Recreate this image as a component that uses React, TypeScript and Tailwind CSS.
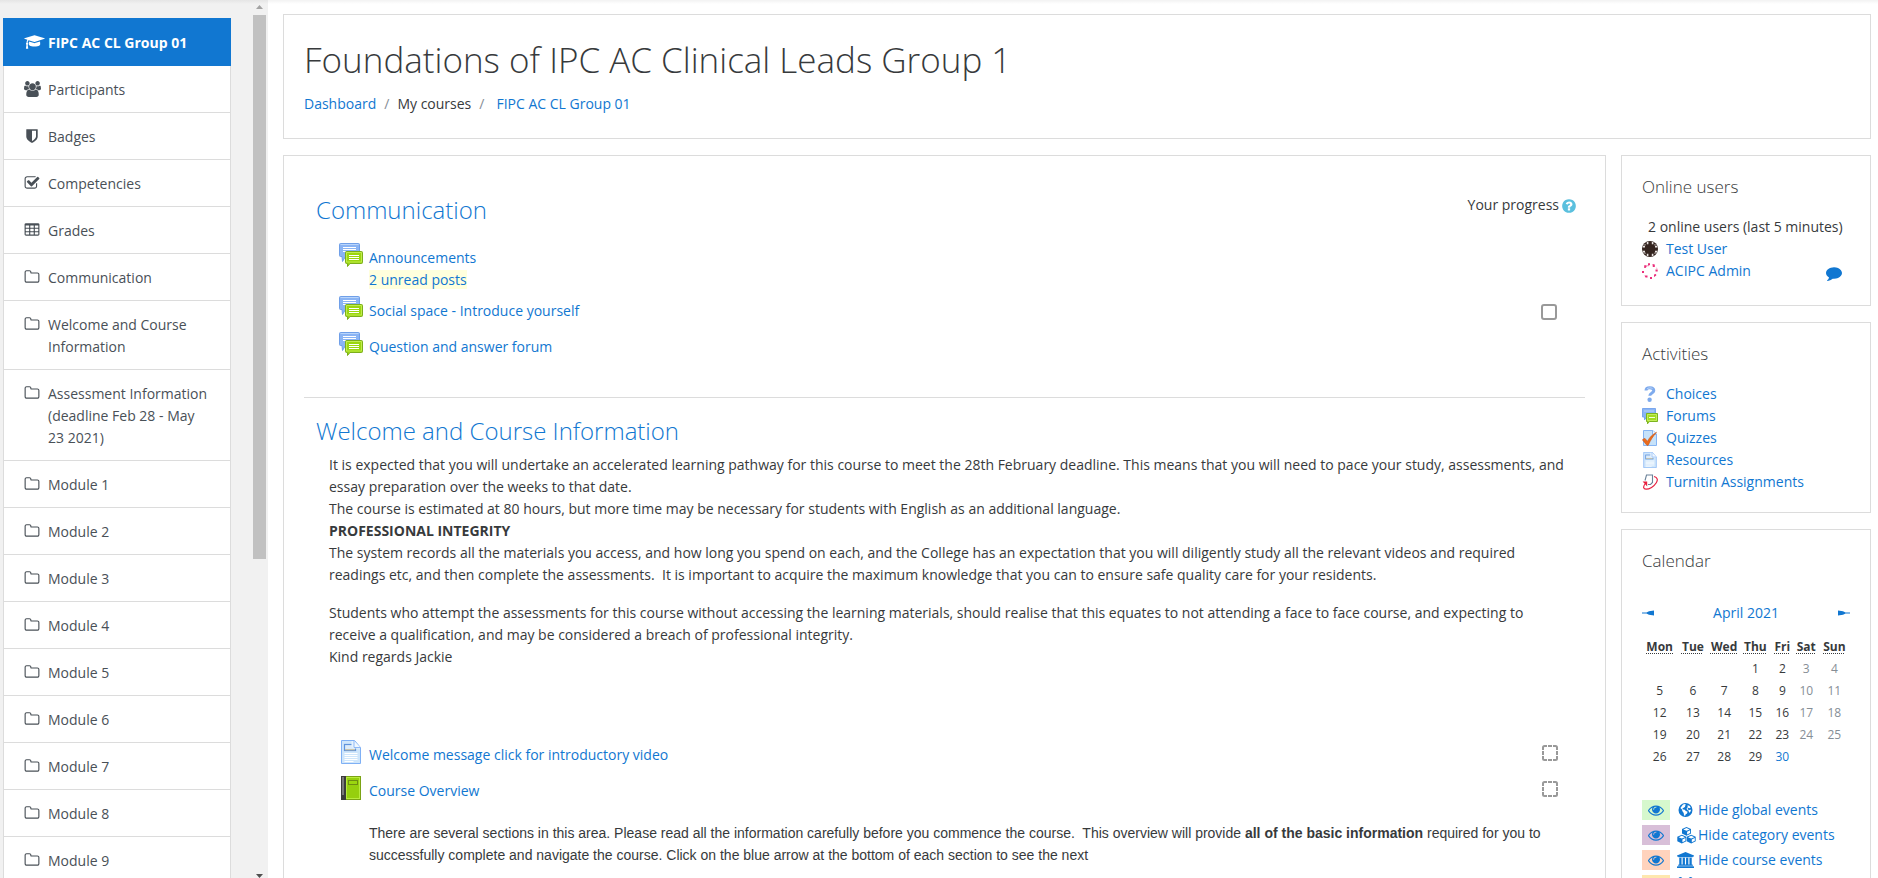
import type { ReactNode } from "react";

const LINK = "text-[#1177d1] hover:underline";

function Glyph({ d, w = 1792, className }: { d: string; w?: number; className: string }) {
  return (
    <svg viewBox={`0 0 ${w} 1792`} className={className} fill="currentColor" aria-hidden="true">
      <path d={d} />
    </svg>
  );
}

const CAP =
  "M1774 836l18 316q4 69-82 128t-235 93.5-323 34.5-323-34.5-235-93.5-82-128l18-316 574 181q22 7 48 7t48-7zm530-324q0 23-22 31l-1120 352q-4 1-10 1t-10-1l-652-206q-43 34-71 111.5t-34 178.5q63 36 63 109 0 69-58 107l58 433q2 14-8 25-9 11-24 11h-192q-15 0-24-11-10-11-8-25l58-433q-58-38-58-107 0-73 65-111 11-207 98-330l-333-104q-22-8-22-31t22-31l1120-352q4-1 10-1t10 1l1120 352q22 8 22 31z";
const USERS =
  "M593 896q-162 5-265 128h-134q-82 0-138-40.5t-56-118.5q0-353 124-353 6 0 43.5 21t97.5 42.5 119 21.5q67 0 133-23-5 37-5 66 0 139 81 256zm1071 637q0 120-73 189.5t-194 69.5h-874q-121 0-194-69.5t-73-189.5q0-53 3.5-103.5t14-109 26.5-108.5 43-97.5 62-81 85.5-53.5 111.5-20q10 0 43 21.5t73 48 107 48 135 21.5 135-21.5 107-48 73-48 43-21.5q61 0 111.5 20t85.5 53.5 62 81 43 97.5 26.5 108.5 14 109 3.5 103.5zm-1024-1277q0 106-75 181t-181 75-181-75-75-181 75-181 181-75 181 75 75 181zm704 384q0 159-112.5 271.5t-271.5 112.5-271.5-112.5-112.5-271.5 112.5-271.5 271.5-112.5 271.5 112.5 112.5 271.5zm576 225q0 78-56 118.5t-138 40.5h-134q-103-123-265-128 81-117 81-256 0-29-5-66 66 23 133 23 59 0 119-21.5t97.5-42.5 43.5-21q124 0 124 353zm-128-609q0 106-75 181t-181 75-181-75-75-181 75-181 181-75 181 75 75 181z";
const SHIELD =
  "M1344 960v-640h-448v1137q119-63 213-137 235-184 235-360zm192-768v768q0 86-33.5 170.5t-83 150-118 127.5-126.5 103-121 77.5-89.5 49.5-42.5 20q-12 6-26 6t-26-6q-16-7-42.5-20t-89.5-49.5-121-77.5-126.5-103-118-127.5-83-150-33.5-170.5v-768q0-26 19-45t45-19h1152q26 0 45 19t19 45z";
const CHECK =
  "M1472 930v318q0 119-84.5 203.5t-203.5 84.5h-832q-119 0-203.5-84.5t-84.5-203.5v-832q0-119 84.5-203.5t203.5-84.5h832q63 0 117 25 15 7 18 23 3 17-9 29l-49 49q-10 10-23 10-3 0-9-2-23-6-45-6h-832q-66 0-113 47t-47 113v832q0 66 47 113t113 47h832q66 0 113-47t47-113v-254q0-13 9-22l64-64q10-10 23-10 6 0 12 3 20 8 20 29zm231-489l-814 814q-24 24-57 24t-57-24l-430-430q-24-24-24-57t24-57l110-110q24-24 57-24t57 24l263 263 647-647q24-24 57-24t57 24l110 110q24 24 24 57t-24 57z";
const CELL = "v-192q0-14-9-23t-23-9h-320q-14 0-23 9t-9 23v192q0 14 9 23t23 9h320q14 0 23-9t9-23z";
const TABLE =
  [576, 1088, 1600].flatMap((x) => [608, 992, 1376].map((y) => `M${x} ${y}${CELL}`)).join("") +
  "M1728 288v1088q0 66-47 113t-113 47h-1344q-66 0-113-47t-47-113v-1088q0-66 47-113t113-47h1344q66 0 113 47t47 113z";
const FOLDER =
  "M1600 1312v-704q0-40-28-68t-68-28h-704q-40 0-68-28t-28-68v-64q0-40-28-68t-68-28h-320q-40 0-68 28t-28 68v960q0 40 28 68t68 28h1216q40 0 68-28t28-68zm128-704v704q0 92-66 158t-158 66h-1216q-92 0-158-66t-66-158v-960q0-92 66-158t158-66h320q92 0 158 66t66 158v32h672q92 0 158 66t66 158z";
const EYE =
  "M1664 960q-152-236-381-353 61 104 61 225 0 185-131.5 316.5t-316.5 131.5-316.5-131.5-131.5-316.5q0-121 61-225-229 117-381 353 133 205 333.5 326.5t434.5 121.5 434.5-121.5 333.5-326.5zm-720-384q0-20-14-34t-34-14q-125 0-214.5 89.5t-89.5 214.5q0 20 14 34t34 14 34-14 14-34q0-86 61-147t147-61q20 0 34-14t14-34zm848 384q0 34-20 69-140 230-376.5 368.5t-499.5 138.5-499.5-139-376.5-368q-20-35-20-69t20-69q140-229 376.5-368t499.5-139 499.5 139 376.5 368q20 35 20 69z";
const COMMENT =
  "M1792 896q0 174-120 321.5t-326 233-450 85.5q-70 0-145-8-198 175-460 242-49 14-114 22-17 2-30.5-9t-17.5-29v-1q-3-4-.5-12t2-10 4.5-9.5l6-9 7-8.5 8-9q7-8 31-34.5t34.5-38 31-39.5 32.5-51 27-59 26-76q-157-89-247.5-220t-90.5-281q0-130 71-248.5t191-204.5 286-136.5 348-50.5q244 0 450 85.5t326 233 120 321.5z";
const HELP =
  "M1024 1376v-192q0-14-9-23t-23-9h-192q-14 0-23 9t-9 23v192q0 14 9 23t23 9h192q14 0 23-9t9-23zm256-672q0-88-55.5-163t-138.5-116-170-41q-243 0-371 213-15 24 8 42l132 100q7 6 19 6 16 0 25-12 53-68 86-92 34-24 86-24 48 0 85.5 26t37.5 59q0 38-20 61t-68 45q-63 28-115.5 86.5t-52.5 125.5v36q0 14 9 23t23 9h192q14 0 23-9t9-23q0-19 21.5-49.5t54.5-49.5q32-18 49-28.5t46-35 44.5-48 28-60.5 12.5-81zm384 192q0 209-103 385.5t-279.5 279.5-385.5 103-385.5-103-279.5-279.5-103-385.5 103-385.5 279.5-279.5 385.5-103 385.5 103 279.5 279.5 103 385.5z";
const UNIVERSITY =
  "M960 0l960 384v128h-128q0 26-20.5 45t-48.5 19h-1526q-28 0-48.5-19t-20.5-45h-128v-128zm-704 640h256v768h128v-768h256v768h128v-768h256v768h128v-768h256v768h59q28 0 48.5 19t20.5 45v64h-1664v-64q0-26 20.5-45t48.5-19h59v-768zm1595 960q28 0 48.5 19t20.5 45v128h-1920v-128q0-26 20.5-45t48.5-19h1782z";

function Globe() {
  return (
    <svg viewBox="0 0 16 16" className="h-4 w-4" aria-hidden="true">
      <circle cx="8.500" cy="8" r="7" fill="#1177d1" />
      <path d="M6 2.400 8 2l1 1-1.200.8.4 1-1.500.9-1.200.5.3 1.200 1.500.2 1.600 1.400 1.700.7-.6 1.700-1.500 1-.4 1.500-1.100-.6-.3-2.400-1.400-1.800L5 7.400 3.400 6z" fill="#fff" />
      <path d="m10.500 3.200 1.900.6 1.300 1.700-1 .7-1.200-.4-1.100 1.100.8.9 1.700.2.800-.6.2 1.400-1.200 2-.8-.9-.3-1.400-1.500-.5-.5-1.500 1.100-1.200z" fill="#fff" />
    </svg>
  );
}

function Cube({ x, y }: { x: number; y: number }) {
  return (
    <g transform={`translate(${x} ${y})`}>
      <path d="M4.500 0 9 1.900v4.500L4.500 8.700 0 6.400V1.900z" fill="#1177d1" />
      <path d="M4.500 1 7.700 2.400 4.500 3.800 1.300 2.400zM5.100 4.700l3-1.400v2.600L5.100 7.500z" fill="#fff" />
    </g>
  );
}

function Cubes() {
  return (
    <svg viewBox="0 0 19 17" className="h-[17px] w-[19px]" aria-hidden="true">
      <Cube x={5} y={0} />
      <Cube x={0.3} y={7.8} />
      <Cube x={9.7} y={7.8} />
    </svg>
  );
}

function ForumIcon() {
  return (
    <svg viewBox="0 0 24 24" className="h-6 w-6" aria-hidden="true">
      <path d="M1.500.5h18a1 1 0 0 1 1 1v11a1 1 0 0 1-1 1H6.500L3.500 18.500 3 13.500H1.500a1 1 0 0 1-1-1v-11a1 1 0 0 1 1-1z" fill="#8ab4f4" stroke="#6f9fe8" />
      <path d="M1.500 1.500h18" stroke="#b9d5fb" />
      <path d="M4 4.500h13M4 6.500h13M4 8.500h3" stroke="#fff" />
      <path d="M7.500 8.500h15a1 1 0 0 1 1 1v10a1 1 0 0 1-1 1H11L8.500 23.500v-3h-1a1 1 0 0 1-1-1v-10a1 1 0 0 1 1-1z" fill="#9bd60f" stroke="#7cae1c" />
      <path d="M7.500 9.500h15v9.500h-15z" fill="none" stroke="#c0ec4f" />
      <path d="M10 12.500h10M10 14.500h10M10 16.500h10" stroke="#fff" />
    </svg>
  );
}

function ForumSmallIcon() {
  return (
    <svg viewBox="0 0 16 16" className="h-4 w-4" aria-hidden="true">
      <path d="M.5.5h13v8.500H4.500L2.500 12V9h-2z" fill="#8ab4f4" stroke="#7aa7ee" />
      <path d="M2 3h10" stroke="#b9d5fb" />
      <path d="M4.500 5.500h11v8H7.500L5.500 15.800V13.500h-1z" fill="#a2db22" stroke="#7cb320" />
      <path d="M5.500 6.500h9v6h-9z" fill="none" stroke="#c4ef5a" />
      <path d="M7 9.500h6" stroke="#f3ffd9" />
    </svg>
  );
}

function PageIcon({ className }: { className: string }) {
  return (
    <svg viewBox="0 0 24 24" className={className} aria-hidden="true">
      <path d="M2.500.5h13l6 7v16h-19z" fill="#cfe6fb" stroke="#7fb0f5" />
      <rect x="5.500" y="4.500" width="11" height="6" fill="#dcebf9" stroke="#5f93dc" strokeWidth="1.200" />
      <path d="M6 9.800h10" stroke="#c9b98f" />
      <path d="M12.500 1v5.500l2 2h6.500l-6-7.500z" fill="#e6f3ff" />
      <path d="M15 1v6.500h6.500" fill="#f0f8ff" stroke="#8fb9f5" />
      <path d="M5.500 13.500h13M5.500 15.500h13M5.500 17.500h13M5.500 19.500h13M5.500 21.500h9" stroke="#fff" />
    </svg>
  );
}

function BookIcon() {
  return (
    <svg viewBox="0 0 24 24" className="h-6 w-6" aria-hidden="true">
      <rect x="2" y="0" width="20" height="24" fill="#7ba315" />
      <rect x="7" y="1" width="14" height="22" fill="#b9ec3e" />
      <rect x="8" y="2" width="12" height="20" fill="#96cf0e" />
      <rect x="2" width="5" height="24" fill="#3c3c3c" />
      <rect x="3" y="1" width="2" height="18" fill="#7a7a7a" />
      <rect x="9.500" y="4.500" width="9" height="4" fill="#9bd60f" stroke="#6d8f10" />
    </svg>
  );
}

function ChoiceIcon() {
  return (
    <svg viewBox="0 0 16 16" className="h-4 w-4" fill="none" aria-hidden="true">
      <path d="M4 4.600C4 2.400 5.700 1.800 7.800 1.800c2.300 0 4 .9 4 3 0 2.200-4 2.300-4 5" stroke="#7fabed" strokeWidth="3" />
      <circle cx="7.600" cy="13.700" r="2.200" fill="#7fabed" />
      <path d="M5 3C6 1.700 9 1.500 10.500 2.500" stroke="#b8d3f8" />
    </svg>
  );
}

function QuizIcon() {
  return (
    <svg viewBox="0 0 16 16" className="h-4 w-4" aria-hidden="true">
      <path d="M1.500.5h9.500l3.500 3.500v11.500h-13z" fill="#c6e2fa" stroke="#86b5f3" />
      <path d="M10.500.5v4h4" fill="#eef7ff" stroke="#86b5f3" />
      <path d="M.3 9.800 2.800 8.300 5.500 11.200C7.500 7.300 10.500 4.300 14.600 2.200 11.200 6 8.600 10 6.300 15.200L5 15.400z" fill="#ea6a1c" stroke="#c4530e" strokeWidth=".5" />
    </svg>
  );
}

function TurnitinIcon() {
  return (
    <svg viewBox="0 0 16 16" className="h-4 w-4" fill="none" aria-hidden="true">
      <path d="M6 10.500H8.500L10.500 8.500V1H4.500L3 6.500" stroke="#6a8299" strokeWidth="1.100" />
      <path d="M12 2.500c3.400 1 4.200 3.200 2.300 6.300-2.200 3.700-7 6.500-10.300 6.400C1.300 15 .8 13 3 10" stroke="#e8203f" strokeWidth="1.200" />
      <path d="M.6 7.500h4.600v5z" fill="#e8203f" />
    </svg>
  );
}

function DarkAvatar() {
  return (
    <svg viewBox="0 0 16 16" className="h-4 w-4" aria-hidden="true">
      <circle cx="8" cy="8" r="8" fill="#34241f" />
      <path
        d="M4.800 1h1.600v2.200H4.800zM9.800 1h1.600v2.200H9.800zM4.800 12.800h1.600V15H4.800zM9.800 12.800h1.600V15H9.800zM.8 4.800H3v1.600H.8zM.8 9.800H3v1.600H.8zM13 4.800h2.200v1.600H13zM13 9.800h2.200v1.600H13zM2.500 2.800 4 4 2.800 4.500zM13.500 2.800 12 4l1.200.5zM2.500 13.200 4 12l-1.200-.5zM13.500 13.200 12 12l1.200-.5z"
        fill="#e9e4e2"
      />
    </svg>
  );
}

function PinkAvatar() {
  return (
    <svg viewBox="0 0 16 16" className="h-4 w-4" aria-hidden="true">
      <path
        d="M6 .3h2v2H6zM10.500 1l2.300.5V4h-2zM2.200 2.200h2.400v1.500L3.500 5H2.200zM13.500 6.500h2.200v2h-2.200zM0 8h2v2H0zM2.500 12.500h3v2h-2zM8 14h2v2H8zM12 11.500l2-.5.3 1.500-2.300 1.500zM14.500 4.500l1 1h-1zM5.500 2.300h1v1h-1z"
        fill="#ea2f7b"
      />
    </svg>
  );
}

const TOP_NAV: { label: string; icon: ReactNode }[] = [
  { label: "Participants", icon: <Glyph d={USERS} w={1920} className="h-4 w-[17px]" /> },
  { label: "Badges", icon: <Glyph d={SHIELD} className="h-4 w-4" /> },
  { label: "Competencies", icon: <Glyph d={CHECK} className="h-4 w-4" /> },
  { label: "Grades", icon: <Glyph d={TABLE} className="h-4 w-4" /> },
];
const SECTIONS = [
  "Communication",
  "Welcome and Course Information",
  "Assessment Information (deadline Feb 28 - May 23 2021)",
  "Module 1",
  "Module 2",
  "Module 3",
  "Module 4",
  "Module 5",
  "Module 6",
  "Module 7",
  "Module 8",
  "Module 9",
];

function NavItem({ icon, label }: { icon: ReactNode; label: string }) {
  return (
    <li>
      <a href="#" className="flex border-x border-b border-[#dcdcdc] bg-white pt-[13px] pr-4 pb-[11px] pl-5 text-[#495057]">
        <span className="flex h-5 w-6 shrink-0 items-center">{icon}</span>
        <span>{label}</span>
      </a>
    </li>
  );
}

function Sidebar() {
  return (
    <aside className="flex w-[268px] shrink-0 justify-between bg-[#f1f1f1] pr-0.5">
      <nav aria-label="Course" className="ml-[3px] w-[228px] overflow-hidden pt-[18px]">
        <ul>
          <li>
            <a href="#" className="flex bg-[#1177d1] pt-3.5 pb-3 pl-[21px] font-bold text-white">
              <span className="flex h-5 w-6 shrink-0 items-center">
                <Glyph d={CAP} w={2304} className="h-4 w-[21px]" />
              </span>
              FIPC AC CL Group 01
            </a>
          </li>
          {TOP_NAV.map((n) => (
            <NavItem key={n.label} {...n} />
          ))}
          {SECTIONS.map((s) => (
            <NavItem key={s} label={s} icon={<Glyph d={FOLDER} className="h-4 w-4" />} />
          ))}
        </ul>
      </nav>
      <div className="flex w-[13px] flex-col items-center" aria-hidden="true">
        <svg viewBox="0 0 13 15" className="h-[15px] w-[13px] shrink-0">
          <path d="M3 9h7L6.500 5z" fill="#a3a3a3" />
        </svg>
        <div className="h-[62%] w-full bg-[#c1c1c1]" />
        <svg viewBox="0 0 13 6" className="mt-auto h-1.5 w-[13px] shrink-0">
          <path d="M3 2h7L6.500 6z" fill="#505050" />
        </svg>
      </div>
    </aside>
  );
}

function SectionTitle({ children }: { children: ReactNode }) {
  return (
    <h3 className="text-2xl leading-8 font-light">
      <a href="#" className={LINK}>
        {children}
      </a>
    </h3>
  );
}

function Activity({ icon, title, unread, children }: { icon: ReactNode; title: string; unread?: string; children?: ReactNode }) {
  return (
    <li className={unread ? "flex pb-[5px]" : "flex pb-2.5"}>
      <span className="mr-1.5 h-6 shrink-0">{icon}</span>
      <div className="flex-1 pt-1">
        <a href="#" className={LINK}>
          {title}
        </a>
        {unread && (
          <div>
            <a href="#" className="bg-[#ffffdd] text-[#1177d1]">
              {unread}
            </a>
          </div>
        )}
      </div>
      {children}
    </li>
  );
}

function AutoCompletion({ title }: { title: string }) {
  return (
    <span className="pt-[5px]">
      <svg viewBox="0 0 16 16" className="h-4 w-4" role="img" aria-label={`Not completed: ${title}`}>
        <path
          d="M1 5V2.500A1.500 1.500 0 0 1 2.500 1H5M6 1h4M11 1h2.500A1.500 1.500 0 0 1 15 2.500V5M15 6v4M15 11v2.500a1.500 1.500 0 0 1-1.500 1.500H11M10 15H6M5 15H2.500A1.500 1.500 0 0 1 1 13.500V11M1 10V6"
          fill="none"
          stroke="#999"
          strokeWidth="2"
        />
      </svg>
    </span>
  );
}

function Course() {
  return (
    <main className="min-w-0 flex-1 border border-[#dcdcdc] px-5 pt-[38px]">
      <section className="border-b border-[#dcdcdc] pb-[29px] pl-3">
        <div className="flex justify-between pr-2">
          <SectionTitle>Communication</SectionTitle>
          <div className="flex h-[22px] items-center gap-0.5">
            Your progress
            <button type="button" aria-label="Help with your progress" className="pt-0.5 text-[#5bc0de]">
              <Glyph d={HELP} className="h-4 w-4" />
            </button>
          </div>
        </div>
        <ul className="mt-[17px] pr-7 pl-[23px]">
          <Activity icon={<ForumIcon />} title="Announcements" unread="2 unread posts" />
          <Activity icon={<ForumIcon />} title="Social space - Introduce yourself">
            <input
              type="checkbox"
              aria-label="Mark Social space - Introduce yourself as done"
              className="mt-2 h-4 w-4 appearance-none rounded-[3px] border-2 border-[#999] bg-white"
            />
          </Activity>
          <Activity icon={<ForumIcon />} title="Question and answer forum" />
        </ul>
      </section>
      <section className="pt-[17px] pl-3">
        <SectionTitle>Welcome and Course Information</SectionTitle>
        <div className="mt-[7px] pl-[13px]">
          <p>
            It is expected that you will undertake an accelerated learning pathway for this course to meet the 28th February deadline. This means that you will need to pace your study, assessments, and
            essay preparation over the weeks to that date.
          </p>
          <p>The course is estimated at 80 hours, but more time may be necessary for students with English as an additional language.</p>
          <p className="font-bold">PROFESSIONAL INTEGRITY</p>
          <p className="pr-8">
            The system records all the materials you access, and how long you spend on each, and the College has an expectation that you will diligently study all the relevant videos and required
            readings etc, and then complete the assessments.&nbsp; It is important to acquire the maximum knowledge that you can to ensure safe quality care for your residents.
          </p>
          <p className="mt-4 pr-8">
            Students who attempt the assessments for this course without accessing the learning materials, should realise that this equates to not attending a face to face course, and expecting to
            receive a qualification, and may be considered a breach of professional integrity.
          </p>
          <p>Kind regards Jackie</p>
        </div>
        <ul className="mt-[72px] pr-[27px] pl-[23px]">
          <Activity icon={<PageIcon className="h-6 w-6" />} title="Welcome message click for introductory video">
            <AutoCompletion title="Welcome message" />
          </Activity>
          <Activity icon={<BookIcon />} title="Course Overview">
            <AutoCompletion title="Course Overview" />
          </Activity>
        </ul>
        <p className="mt-2.5 pr-8 pl-[53px] font-['Liberation_Sans',Arial,sans-serif]">
          There are several sections in this area. Please read all the information carefully before you commence the course.&nbsp; This overview will provide{" "}
          <strong className="font-bold">all of the basic information</strong> required for you to successfully complete and navigate the course. Click on the blue arrow at the bottom of each section to see
          the next
        </p>
      </section>
    </main>
  );
}

function Block({ title, children }: { title: string; children: ReactNode }) {
  return (
    <section className="border border-[#dcdcdc] px-5 pt-5 pb-[19px]">
      <h5 className="text-[17px] leading-[22px] font-light text-[#373a3c]">{title}</h5>
      {children}
    </section>
  );
}

const ACTIVITIES: [string, ReactNode][] = [
  ["Choices", <ChoiceIcon />],
  ["Forums", <ForumSmallIcon />],
  ["Quizzes", <QuizIcon />],
  ["Resources", <PageIcon className="h-4 w-4" />],
  ["Turnitin Assignments", <TurnitinIcon />],
];

const DAYS = ["Mon", "Tue", "Wed", "Thu", "Fri", "Sat", "Sun"];
const WEEKS = [
  [0, 0, 0, 1, 2, 3, 4],
  [5, 6, 7, 8, 9, 10, 11],
  [12, 13, 14, 15, 16, 17, 18],
  [19, 20, 21, 22, 23, 24, 25],
  [26, 27, 28, 29, 30, 0, 0],
];

function dayTone(day: number, col: number) {
  if (day === 30) return "text-[#1177d1]";
  return col > 4 ? "text-[#868e96]" : "";
}

const FILTERS: [string, string, ReactNode][] = [
  ["Hide global events", "bg-[#d6f8cd]", <Globe />],
  ["Hide category events", "bg-[#d8bfd8]", <Cubes />],
  ["Hide course events", "bg-[#ffd3bd]", <Glyph d={UNIVERSITY} w={1920} className="h-4 w-[17px]" />],
  ["Hide group events", "bg-[#fee7ae]", <Glyph d={USERS} w={1920} className="h-4 w-[17px]" />],
];

function Calendar() {
  return (
    <Block title="Calendar">
      <div className="mt-[30px] flex items-center justify-between">
        <a href="#" aria-label="Previous month" className="text-[#1177d1]">
          <svg viewBox="0 0 12 6" className="h-1.5 w-3" fill="currentColor">
            <path d="M0 2.500h4.500L7 1.200 12 .5v5L7 4.800 4.500 3.500H0z" />
          </svg>
        </a>
        <a href="#" className={LINK}>
          April 2021
        </a>
        <a href="#" aria-label="Next month" className="text-[#1177d1]">
          <svg viewBox="0 0 12 6" className="h-1.5 w-3" fill="currentColor">
            <path d="M12 2.500H7.500L5 1.200 0 .5v5l5-.7 2.500-1.300H12z" />
          </svg>
        </a>
      </div>
      <table className="mt-3 w-full table-fixed text-center text-xs leading-[22px]">
        <colgroup>
          <col className="w-[17%]" />
          <col className="w-[15%]" />
          <col className="w-[15%]" />
          <col className="w-[15%]" />
          <col className="w-[11%]" />
          <col className="w-[12%]" />
          <col className="w-[15%]" />
        </colgroup>
        <thead>
          <tr>
            {DAYS.map((d) => (
              <th key={d} scope="col" className="p-0 font-bold">
                <abbr className="underline decoration-dotted decoration-1 underline-offset-2">{d}</abbr>
              </th>
            ))}
          </tr>
        </thead>
        <tbody>
          {WEEKS.map((week, i) => (
            <tr key={i} className="h-[22px]">
              {week.map((day, col) => (
                <td key={col} className={dayTone(day, col)}>
                  {day === 30 ? <a href="#">{day}</a> : day || ""}
                </td>
              ))}
            </tr>
          ))}
        </tbody>
      </table>
      <ul className="mt-8 flex flex-col gap-[5px]">
        {FILTERS.map(([label, tone, icon]) => (
          <li key={label}>
            <a href="#" className="flex h-5 items-center whitespace-nowrap text-[#1177d1]">
              <span className={`flex h-5 w-7 items-center justify-center ${tone}`}>
                <Glyph d={EYE} className="h-4 w-4" />
              </span>
              <span className="ml-[7px] flex w-[21px] items-center justify-start">{icon}</span>
              {label}
            </a>
          </li>
        ))}
      </ul>
    </Block>
  );
}

export default function App() {
  return (
    <div className="relative flex h-screen overflow-hidden bg-white font-['Open_Sans','Noto_Sans',sans-serif] text-[14px] leading-[22px] text-[#373a3c]">
      <div className="absolute inset-x-0 top-0 h-1 bg-linear-to-b from-black/5 to-transparent" />
      <Sidebar />
      <div className="min-w-0 flex-1 overflow-hidden pt-3.5 pr-[7px] pl-[15px]">
        <header className="border border-[#dcdcdc] px-5 py-[23px]">
          <h1 className="text-[35px] leading-[44px] font-light">Foundations of IPC AC Clinical Leads Group 1</h1>
          <nav aria-label="Breadcrumb" className="mt-[11px] flex">
            <a href="#" className={LINK}>
              Dashboard
            </a>
            <span className="mx-2 text-[#868e96]">/</span>
            <span>My courses</span>
            <span className="mr-3 ml-2 text-[#868e96]">/</span>
            <a href="#" className={LINK}>
              FIPC AC CL Group 01
            </a>
          </nav>
        </header>
        <div className="mt-4 flex items-stretch gap-[15px]">
          <Course />
          <aside className="flex w-[250px] shrink-0 flex-col gap-4">
            <Block title="Online users">
              <p className="mt-[18px] pl-1.5 whitespace-nowrap">2 online users (last 5 minutes)</p>
              <ul className="pb-1">
                <li className="flex items-center gap-2">
                  <DarkAvatar />
                  <a href="#" className={LINK}>
                    Test User
                  </a>
                </li>
                <li className="flex items-center gap-2">
                  <PinkAvatar />
                  <a href="#" className={LINK}>
                    ACIPC Admin
                  </a>
                  <button type="button" aria-label="Message ACIPC Admin" className="mr-2 ml-auto pt-1 text-[#1177d1]">
                    <Glyph d={COMMENT} className="h-4 w-4" />
                  </button>
                </li>
              </ul>
            </Block>
            <Block title="Activities">
              <ul className="mt-[18px]">
                {ACTIVITIES.map(([label, icon]) => (
                  <li key={label} className="flex items-center gap-2">
                    {icon}
                    <a href="#" className={LINK}>
                      {label}
                    </a>
                  </li>
                ))}
              </ul>
            </Block>
            <Calendar />
          </aside>
        </div>
      </div>
    </div>
  );
}
